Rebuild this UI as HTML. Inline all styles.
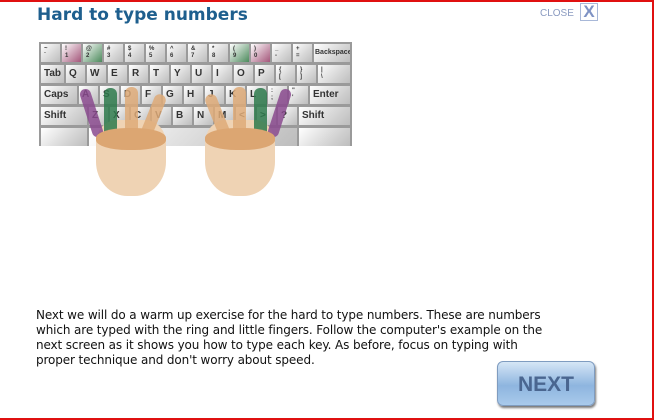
<!DOCTYPE html>
<html><head><meta charset="utf-8"><style>
body{margin:0;width:655px;height:419px;overflow:hidden;background:#fff;position:relative;font-family:"DejaVu Sans","Liberation Sans",sans-serif}
.frame{position:absolute;left:0;top:0;width:652px;height:416px;border-top:2px solid #e01010;border-right:2px solid #e01010;border-bottom:2px solid #e01010;box-sizing:content-box}
h1{position:absolute;left:37px;top:5px;margin:0;font:bold 17px "DejaVu Sans",sans-serif;color:#1e5f8e}
.close{position:absolute;left:540px;top:8px;font:10px "Liberation Sans",sans-serif;color:#8a9ac0}
.x{position:absolute;left:580px;top:3px;width:16px;height:16px;border:1px solid #a8b8d8;color:#7f93c4;font:bold 17px "Liberation Sans",sans-serif;line-height:16px;text-align:center}
.kb{position:absolute;left:39px;top:42px;width:313px;height:104px;background:#9a9a9a}
.k{position:absolute;height:18px;background:linear-gradient(135deg,#fff,#d6d6d6 60%,#bdbdbd);font:bold 10px "Liberation Sans",sans-serif;color:#333;line-height:18px;padding-left:3px;box-sizing:border-box;overflow:hidden}
.s{font-size:6px;line-height:7px;padding-top:2px}
.p{background:linear-gradient(135deg,#fff,#a4567a)}
.g{background:linear-gradient(135deg,#fff,#4c8a5c)}
.hand{position:absolute;background:#efd3b4;border-radius:30% 30% 45% 45%}
.f{position:absolute;border-radius:6px;opacity:.85}
.txt{position:absolute;left:36px;top:308px;width:515px;font-size:12px;letter-spacing:-0.12px;line-height:15px;color:#111}
.next{position:absolute;left:497px;top:361px;width:98px;height:45px;border-radius:6px;background:linear-gradient(#d5e6f6,#8eb5df 55%,#a9caeb);border:1px solid #7f9cc0;box-shadow:1px 2px 2px #777;font:bold 21px "Liberation Sans",sans-serif;color:#4a6690;text-align:center;line-height:45px;box-sizing:border-box}
</style></head><body>
<div class="frame"></div>
<h1>Hard to type numbers</h1>
<div class="close">CLOSE</div><div class="x">X</div>
<div class="kb">
<div class="k s" style="left:2px;top:2px;width:19px">~<br>`</div>
<div class="k s p" style="left:23px;top:2px;width:19px">!<br>1</div>
<div class="k s g" style="left:44px;top:2px;width:19px">@<br>2</div>
<div class="k s" style="left:65px;top:2px;width:19px">#<br>3</div>
<div class="k s" style="left:86px;top:2px;width:19px">$<br>4</div>
<div class="k s" style="left:107px;top:2px;width:19px">%<br>5</div>
<div class="k s" style="left:128px;top:2px;width:19px">^<br>6</div>
<div class="k s" style="left:149px;top:2px;width:19px">&amp;<br>7</div>
<div class="k s" style="left:170px;top:2px;width:19px">*<br>8</div>
<div class="k s g" style="left:191px;top:2px;width:19px">(<br>9</div>
<div class="k s p" style="left:212px;top:2px;width:19px">)<br>0</div>
<div class="k s" style="left:233px;top:2px;width:19px">_<br>-</div>
<div class="k s" style="left:254px;top:2px;width:19px">+<br>=</div>
<div class="k" style="left:275px;top:2px;width:36px;font-size:7px;padding-left:1px">Backspace</div>
<div class="k" style="left:2px;top:23px;width:23px">Tab</div>
<div class="k" style="left:27px;top:23px;width:19px">Q</div>
<div class="k" style="left:48px;top:23px;width:19px">W</div>
<div class="k" style="left:69px;top:23px;width:19px">E</div>
<div class="k" style="left:90px;top:23px;width:19px">R</div>
<div class="k" style="left:111px;top:23px;width:19px">T</div>
<div class="k" style="left:132px;top:23px;width:19px">Y</div>
<div class="k" style="left:153px;top:23px;width:19px">U</div>
<div class="k" style="left:174px;top:23px;width:19px">I</div>
<div class="k" style="left:195px;top:23px;width:19px">O</div>
<div class="k" style="left:216px;top:23px;width:19px">P</div>
<div class="k s" style="left:237px;top:23px;width:19px">{<br>[</div>
<div class="k s" style="left:258px;top:23px;width:19px">}<br>]</div>
<div class="k s" style="left:279px;top:23px;width:32px">|<br>\</div>
<div class="k" style="left:2px;top:44px;width:36px">Caps</div>
<div class="k" style="left:40px;top:44px;width:19px">A</div>
<div class="k" style="left:61px;top:44px;width:19px">S</div>
<div class="k" style="left:82px;top:44px;width:19px">D</div>
<div class="k" style="left:103px;top:44px;width:19px">F</div>
<div class="k" style="left:124px;top:44px;width:19px">G</div>
<div class="k" style="left:145px;top:44px;width:19px">H</div>
<div class="k" style="left:166px;top:44px;width:19px">J</div>
<div class="k" style="left:187px;top:44px;width:19px">K</div>
<div class="k" style="left:208px;top:44px;width:19px">L</div>
<div class="k s" style="left:229px;top:44px;width:19px">:<br>;</div>
<div class="k s" style="left:250px;top:44px;width:19px">"<br>'</div>
<div class="k" style="left:271px;top:44px;width:40px">Enter</div>
<div class="k" style="left:2px;top:65px;width:46px">Shift</div>
<div class="k" style="left:50px;top:65px;width:19px">Z</div>
<div class="k" style="left:71px;top:65px;width:19px">X</div>
<div class="k" style="left:92px;top:65px;width:19px">C</div>
<div class="k" style="left:113px;top:65px;width:19px">V</div>
<div class="k" style="left:134px;top:65px;width:19px">B</div>
<div class="k" style="left:155px;top:65px;width:19px">N</div>
<div class="k" style="left:176px;top:65px;width:19px">M</div>
<div class="k" style="left:197px;top:65px;width:19px">&lt;</div>
<div class="k" style="left:218px;top:65px;width:19px">&gt;</div>
<div class="k" style="left:239px;top:65px;width:19px">?</div>
<div class="k" style="left:260px;top:65px;width:51px">Shift</div>
<div class="k" style="left:2px;top:86px;width:46px"></div>
<div class="k" style="left:50px;top:86px;width:208px"></div>
<div class="k" style="left:260px;top:86px;width:51px"></div>
</div>
<div class="hand" style="left:96px;top:120px;width:70px;height:76px"></div>
<div class="hand" style="left:205px;top:120px;width:70px;height:76px"></div>
<div class="f" style="left:86px;top:88px;width:11px;height:50px;background:#8a4a8e;transform:rotate(-18deg)"></div>
<div class="f" style="left:104px;top:88px;width:13px;height:52px;background:#2e7a4c"></div>
<div class="f" style="left:125px;top:87px;width:13px;height:55px;background:#deaa78"></div>
<div class="f" style="left:147px;top:93px;width:12px;height:48px;background:#deaa78;transform:rotate(22deg)"></div>
<div class="f" style="left:212px;top:93px;width:12px;height:48px;background:#deaa78;transform:rotate(-22deg)"></div>
<div class="f" style="left:233px;top:87px;width:13px;height:55px;background:#deaa78"></div>
<div class="f" style="left:254px;top:88px;width:13px;height:52px;background:#2e7a4c"></div>
<div class="f" style="left:274px;top:88px;width:11px;height:50px;background:#8a4a8e;transform:rotate(18deg)"></div>
<div class="hand" style="left:96px;top:128px;width:70px;height:22px;background:#dca672;border-radius:45%"></div>
<div class="hand" style="left:205px;top:128px;width:70px;height:22px;background:#dca672;border-radius:45%"></div>
<div class="txt">Next we will do a warm up exercise for the hard to type numbers. These are numbers which are typed with the ring and little fingers. Follow the computer's example on the next screen as it shows you how to type each key. As before, focus on typing with proper technique and don't worry about speed.</div>
<div class="next">NEXT</div>
</body></html>
